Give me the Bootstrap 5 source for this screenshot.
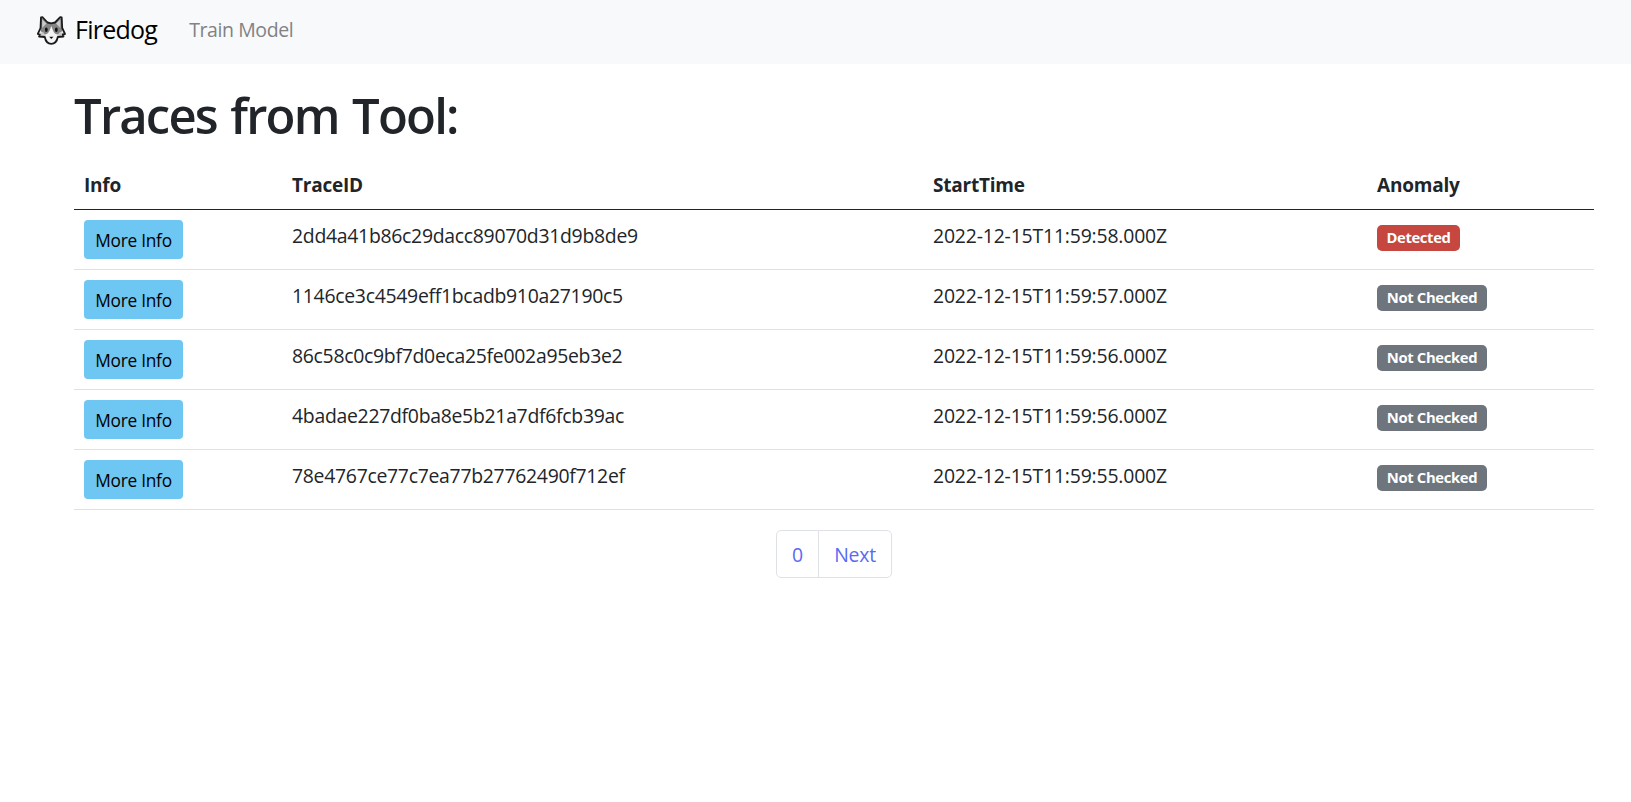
<!DOCTYPE html>
<html lang="en">
<head>
<meta charset="utf-8">
<title>Firedog</title>
<link href="https://cdn.jsdelivr.net/npm/bootstrap@5.3.0/dist/css/bootstrap.min.css" rel="stylesheet">
<style>
  html { font-size: 20px; }
  body { font-family: "Open Sans", "Noto Sans", sans-serif; color: #212529; }
  .topbar { height: 64px; background: #f8f9fb; padding: 0 0 4px 37px; }
  .topbar .navbar-brand { font-size: 25px; letter-spacing: -.75px; color: #000; margin: 0 22px 0 0; padding: 0; gap: 9px; line-height: 36px; }
  .topbar .navbar-brand span { padding-bottom: 2px; }
  .topbar .nav-link { font-size: 19.5px; color: #808284; padding: 0; line-height: 30px; letter-spacing: -.4px; }
  .traces { padding: 21px 37px 0 74px; }
  .traces h1 { font-size: 49px; font-weight: 600; line-height: 60px; letter-spacing: -1.8px; word-spacing: 2.5px; margin-bottom: 13px; }
  .trace-table { table-layout: fixed; font-size: 19.4px; line-height: 30px; color: #212529; margin-bottom: 20px; }
  .trace-table th, .trace-table td { padding: 10px; height: 60px; vertical-align: top; border-bottom: 1px solid #dee2e6; }
  .trace-table thead th { height: 51px; padding: 12px 10px 8px; font-size: 19px; border-bottom-color: #212529; letter-spacing: -.22px; }
  .trace-table tbody td { padding-top: 10px; letter-spacing: -.28px; }
  .trace-table tbody td:nth-child(2), .trace-table tbody td:nth-child(3) { padding-top: 11px; }
  .trace-table tbody td:nth-child(3) { letter-spacing: -.17px; }
  .more-btn { width: 99px; height: 39px; padding: 2px 0 0; background: #6ec6f2; border: 0; border-radius: 4px; font-size: 17.3px; line-height: 37px; letter-spacing: -.25px; color: #000; display: block; }
  .state { height: 26px; width: 110px; padding: 0; margin-top: 5px; border-radius: 5px; font-size: 14.8px; line-height: 24px; display: block; letter-spacing: -.35px; background: #6e757d; }
  .state-hit { width: 83px; background: #c5473f; }
  .pager .page-link { height: 48px; padding: 0; font-size: 19.4px; line-height: 48px; letter-spacing: -.2px; color: #596af5; border-color: #dee2e6; border-radius: 0; text-align: center; width: 43px; }
  .pager .page-item:first-child .page-link { border-radius: 5px 0 0 5px; }
  .pager .page-item:last-child .page-link { width: 74px; border-radius: 0 5px 5px 0; }
</style>
</head>
<body>
<nav class="topbar navbar navbar-expand justify-content-start">
  <a class="navbar-brand d-flex align-items-center" href="#">
    <svg width="29" height="29" viewBox="0 0 29 29" aria-hidden="true">
      <path d="M4 1.4 L5.4 1.2 L10.5 6.2 H18 L23.2 1.2 L24.7 1.5 L25.2 12 L28 18 L25.8 18.5 L26.5 20.5 L20.5 22 Q18.5 27.8 14.3 27.8 Q10 27.8 8 22 L2 20.5 L2.8 18.5 L.8 18 L3.5 12Z" fill="#f4f4f4"/>
      <path d="M4.2 1.5 L10.5 7 H18 L24.5 1.5 L25.2 15 L21 18.5 Q17.5 18.5 15.8 14 L14.3 10 L12.8 14 Q11 18.5 7.5 18.5 L3.5 15Z" fill="#858585"/>
      <path d="M5.2 3.5 L9.5 7.5 L5.2 12Z M23.3 3.5 L19 7.5 L23.3 12Z M2.5 17 L6 16 L9 20 L3 20Z M26.2 17 L23 16 L20 20 L26 20Z" fill="#cacaca"/>
      <path d="M4 1.4 L5.4 1.2 L10.5 6.5 L14.3 7.3 L18 6.5 L23.2 1.2 L24.7 1.5 L25.2 12 L28 18 L25.8 18.5 L26.5 20.5 L20.8 21 Q19.5 27.8 14.3 27.8 Q9 27.8 7.8 21 L2 20.5 L2.8 18.5 L.8 18 L3.5 12Z" fill="none" stroke="#1b1b1b" stroke-width="1.8" stroke-linejoin="round"/>
      <ellipse cx="9.3" cy="13.8" rx="1.4" ry="2.2" fill="#111"/><ellipse cx="19.3" cy="13.8" rx="1.4" ry="2.2" fill="#111"/>
      <path d="M12.2 20.7 H16.5 L14.3 23Z" fill="#111"/>
    </svg>
    <span>Firedog</span>
  </a>
  <ul class="navbar-nav"><li class="nav-item"><a class="nav-link" href="#">Train Model</a></li></ul>
</nav>
<main class="traces">
  <h1>Traces from Tool:</h1>
  <table class="table trace-table">
    <colgroup><col style="width:208px"><col style="width:641px"><col style="width:444px"><col></colgroup>
    <thead><tr><th>Info</th><th>TraceID</th><th>StartTime</th><th>Anomaly</th></tr></thead>
    <tbody>
      <tr><td><button class="btn more-btn">More Info</button></td><td>2dd4a41b86c29dacc89070d31d9b8de9</td><td>2022-12-15T11:59:58.000Z</td><td><span class="badge state state-hit">Detected</span></td></tr>
      <tr><td><button class="btn more-btn">More Info</button></td><td>1146ce3c4549eff1bcadb910a27190c5</td><td>2022-12-15T11:59:57.000Z</td><td><span class="badge state">Not Checked</span></td></tr>
      <tr><td><button class="btn more-btn">More Info</button></td><td>86c58c0c9bf7d0eca25fe002a95eb3e2</td><td>2022-12-15T11:59:56.000Z</td><td><span class="badge state">Not Checked</span></td></tr>
      <tr><td><button class="btn more-btn">More Info</button></td><td>4badae227df0ba8e5b21a7df6fcb39ac</td><td>2022-12-15T11:59:56.000Z</td><td><span class="badge state">Not Checked</span></td></tr>
      <tr><td><button class="btn more-btn">More Info</button></td><td>78e4767ce77c7ea77b27762490f712ef</td><td>2022-12-15T11:59:55.000Z</td><td><span class="badge state">Not Checked</span></td></tr>
    </tbody>
  </table>
  <ul class="pagination pager justify-content-center mb-0">
    <li class="page-item"><a class="page-link" href="#">0</a></li>
    <li class="page-item"><a class="page-link" href="#">Next</a></li>
  </ul>
</main>
<script src="https://cdn.jsdelivr.net/npm/bootstrap@5.3.0/dist/js/bootstrap.bundle.min.js"></script>
</body>
</html>
